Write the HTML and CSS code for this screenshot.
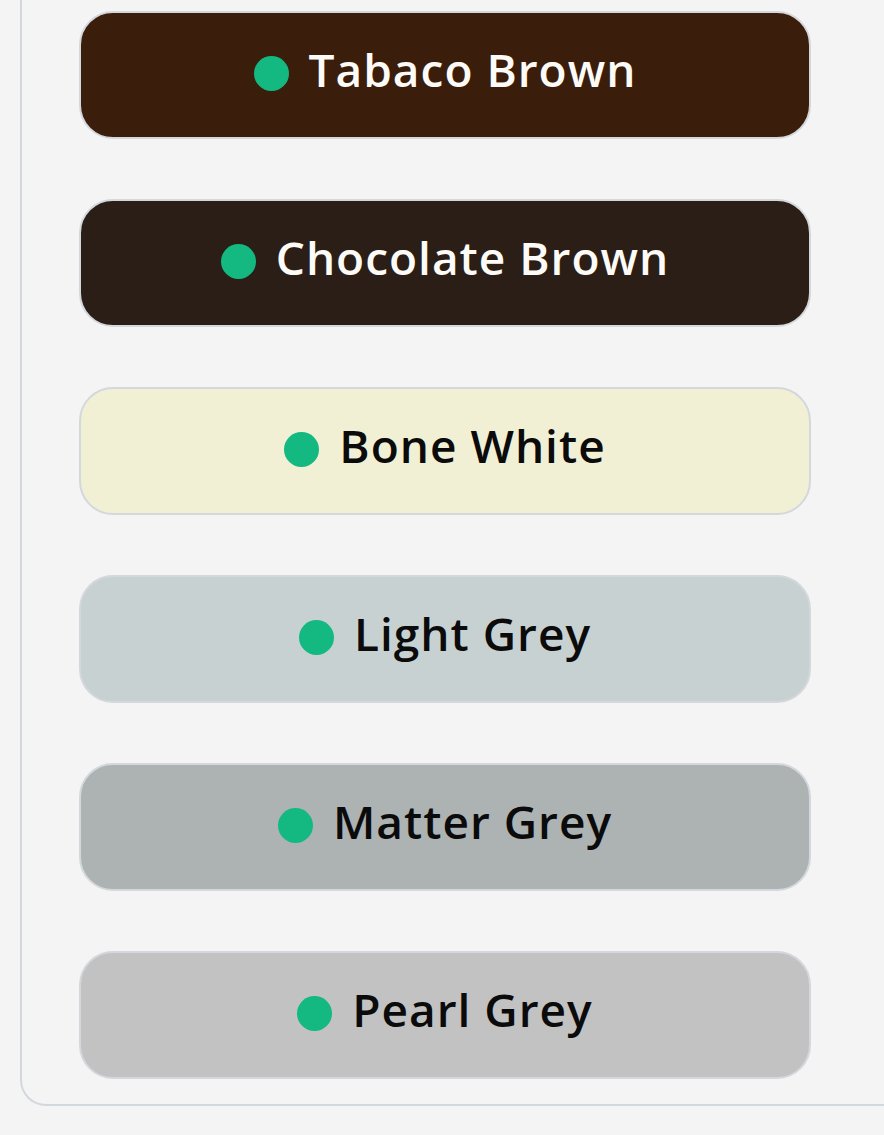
FILE: index.html
```html
<!DOCTYPE html>
<html lang="en">
<head>
<meta charset="utf-8">
<title>Colours</title>
<link rel="stylesheet" href="styles.css">
</head>
<body>
<div class="card">
  <div class="list">
    <div class="swatch tabaco"><span class="dot"></span><span class="label">Tabaco Brown</span></div>
    <div class="swatch chocolate"><span class="dot"></span><span class="label">Chocolate Brown</span></div>
    <div class="swatch bone"><span class="dot"></span><span class="label">Bone White</span></div>
    <div class="swatch light"><span class="dot"></span><span class="label">Light Grey</span></div>
    <div class="swatch matter"><span class="dot"></span><span class="label">Matter Grey</span></div>
    <div class="swatch pearl"><span class="dot"></span><span class="label">Pearl Grey</span></div>
  </div>
</div>
</body>
</html>
```
FILE: styles.css
```css
html, body {
  margin: 0;
  padding: 0;
  background: #f4f4f5;
}
body {
  width: 884px;
  height: 1135px;
  font-family: "Open Sans", "Noto Sans", sans-serif;
}
.card {
  box-sizing: border-box;
  margin-left: 20px;
  width: 864px;
  border-left: 2px solid #d3d7de;
  border-bottom: 2px solid #d3d7de;
  border-bottom-left-radius: 26px;
  padding: 11px 0 25px 57px;
  background: #f4f4f5;
}
.list {
  display: flex;
  flex-direction: column;
  gap: 60px;
  width: 732px;
}
.swatch {
  box-sizing: border-box;
  height: 128px;
  border: 2px solid #d4d7dc;
  border-radius: 34px;
  display: flex;
  align-items: center;
  justify-content: center;
  gap: 20px;
  color: #0b0b0b;
}
.dot {
  width: 35px;
  height: 35px;
  border-radius: 50%;
  background: #13b981;
  flex: none;
  margin-bottom: 3px;
}
.label {
  font-size: 46px;
  font-weight: 600;
  line-height: 1;
  letter-spacing: 1px;
  margin-bottom: 12px;
}
.tabaco { background: #3a1e0b; color: #fdfbf7; }
.chocolate { background: #2b1e16; color: #fdfbf7; }
.bone { background: #f1f0d5; }
.light { background: #c8d1d1; }
.matter { background: #adb2b3; }
.pearl { background: #c2c2c2; }
```
